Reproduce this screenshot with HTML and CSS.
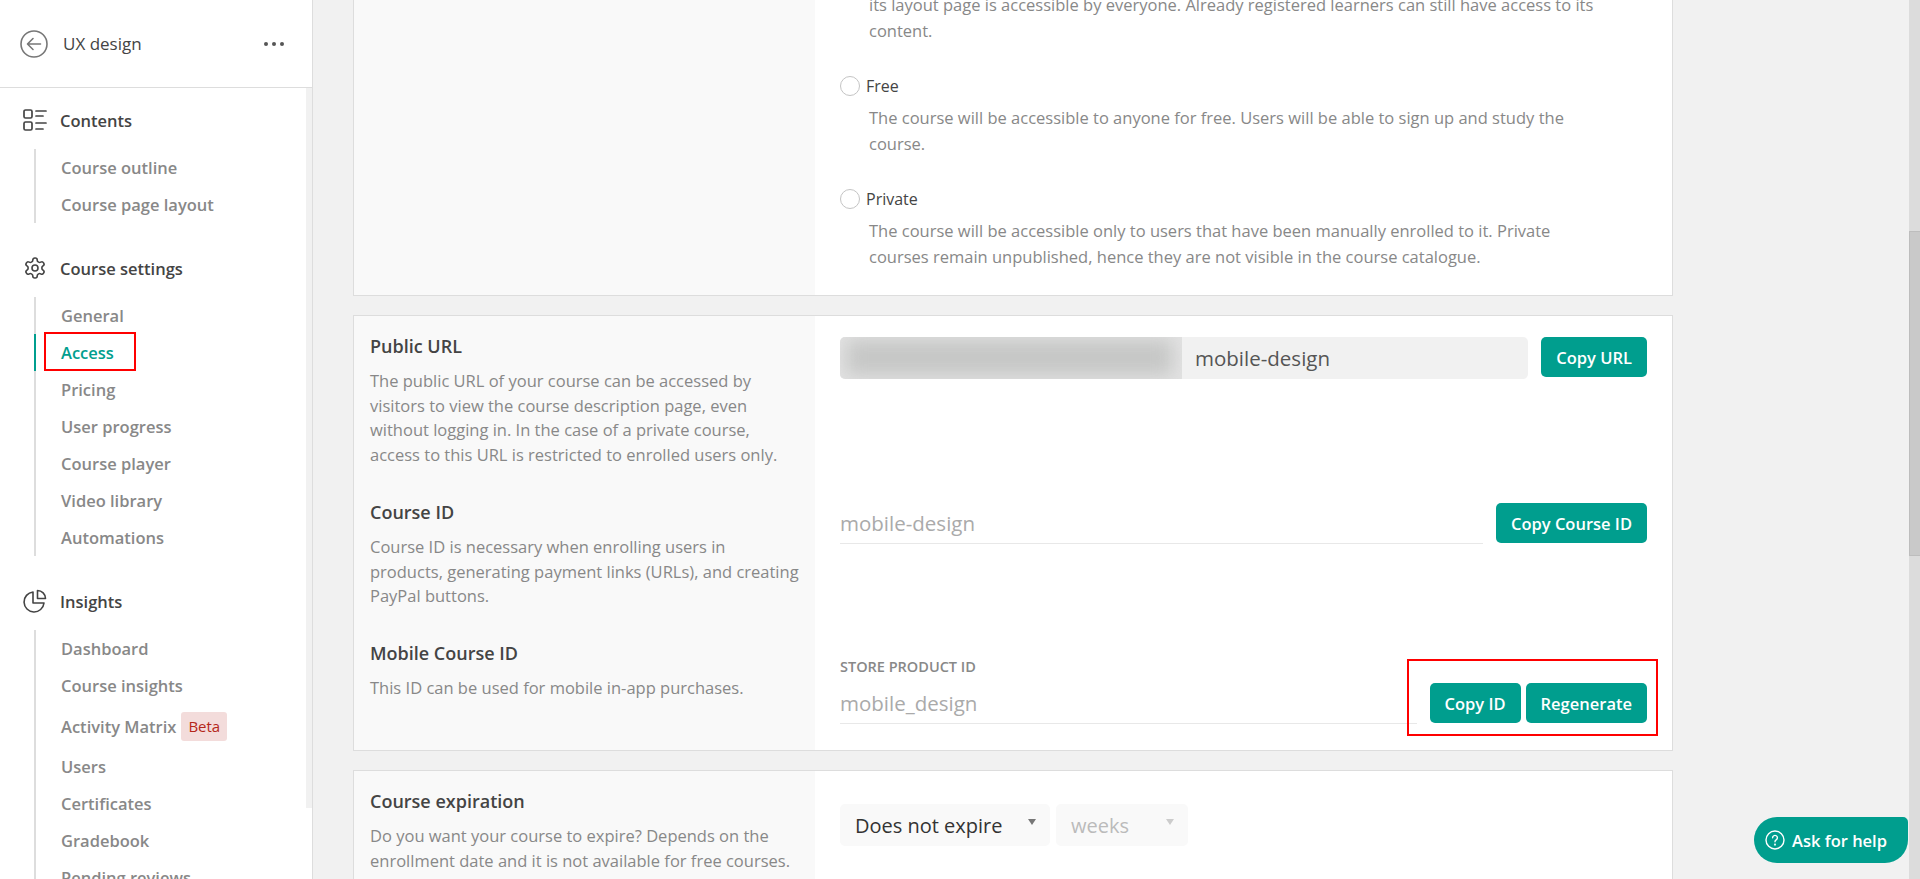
FILE: index.html
```html
<!DOCTYPE html>
<html lang="en">
<head>
  <meta charset="UTF-8">
  <meta name="viewport" content="width=device-width, initial-scale=1.0">
  <title>UX design - Access</title>
  <link rel="stylesheet" href="styles.css">
</head>
<body>
  <div class="app">

    <!-- sidebar -->
    <aside class="sidebar">
      <div class="side-head">
        <svg class="back-icon" viewBox="0 0 28 28" fill="none" stroke="#777" stroke-width="1.6" stroke-linecap="round" stroke-linejoin="round">
          <circle cx="14" cy="14" r="13"/>
          <path d="M20.5 14H8M13 8.5 7.5 14l5.5 5.5"/>
        </svg>
        <span class="side-title">UX design</span>
        <span class="dots"><i></i><i></i><i></i></span>
      </div>
      <div class="side-body">
        <nav class="side-nav">
          <div class="nav-head">
            <svg class="nav-icon" viewBox="0 0 24 24" fill="none" stroke="#444" stroke-width="1.7" stroke-linecap="round" stroke-linejoin="round">
              <rect x="1" y="2" width="8" height="8" rx="1.5"/>
              <rect x="1" y="14" width="8" height="8" rx="1.5"/>
              <path d="M13 3h10M13 8h7M13 15h10M13 21h7"/>
            </svg>
            Contents
          </div>
          <ul class="nav-list">
            <li class="nav-item">Course outline</li>
            <li class="nav-item">Course page layout</li>
          </ul>

          <div class="nav-head">
            <svg class="nav-icon" viewBox="0 0 24 24" fill="none" stroke="#444" stroke-width="1.6" stroke-linecap="round" stroke-linejoin="round">
              <path d="M12.22 2h-.44a2 2 0 0 0-2 2v.18a2 2 0 0 1-1 1.73l-.43.25a2 2 0 0 1-2 0l-.15-.08a2 2 0 0 0-2.73.73l-.22.38a2 2 0 0 0 .73 2.73l.15.1a2 2 0 0 1 1 1.72v.51a2 2 0 0 1-1 1.74l-.15.09a2 2 0 0 0-.73 2.73l.22.38a2 2 0 0 0 2.73.73l.15-.08a2 2 0 0 1 2 0l.43.25a2 2 0 0 1 1 1.73V20a2 2 0 0 0 2 2h.44a2 2 0 0 0 2-2v-.18a2 2 0 0 1 1-1.73l.43-.25a2 2 0 0 1 2 0l.15.08a2 2 0 0 0 2.73-.73l.22-.39a2 2 0 0 0-.73-2.73l-.15-.08a2 2 0 0 1-1-1.74v-.5a2 2 0 0 1 1-1.74l.15-.09a2 2 0 0 0 .73-2.73l-.22-.38a2 2 0 0 0-2.73-.73l-.15.08a2 2 0 0 1-2 0l-.43-.25a2 2 0 0 1-1-1.73V4a2 2 0 0 0-2-2z"/>
              <circle cx="12" cy="12" r="3"/>
            </svg>
            Course settings
          </div>
          <ul class="nav-list">
            <li class="nav-item">General</li>
            <li class="nav-item active">Access<span class="mark-access"></span></li>
            <li class="nav-item">Pricing</li>
            <li class="nav-item">User progress</li>
            <li class="nav-item">Course player</li>
            <li class="nav-item">Video library</li>
            <li class="nav-item">Automations</li>
          </ul>

          <div class="nav-head">
            <svg class="nav-icon" viewBox="0 0 24 24" fill="none" stroke="#444" stroke-width="1.6" stroke-linecap="round" stroke-linejoin="round">
              <path d="M10 3a10 10 0 1 0 11 11H10z"/>
              <path d="M14.5 1.5a8 8 0 0 1 8 8h-8z"/>
            </svg>
            Insights
          </div>
          <ul class="nav-list">
            <li class="nav-item">Dashboard</li>
            <li class="nav-item">Course insights</li>
            <li class="nav-item tall">Activity Matrix <span class="beta">Beta</span></li>
            <li class="nav-item">Users</li>
            <li class="nav-item">Certificates</li>
            <li class="nav-item">Gradebook</li>
            <li class="nav-item">Pending reviews</li>
          </ul>
        </nav>
        <div class="side-scroll"></div>
      </div>
    </aside>

    <!-- main settings -->
    <main class="main">
      <section class="card card-top">
        <div class="card-left"></div>
        <div class="card-right access-options">
          <p class="option-desc first">its layout page is accessible by everyone. Already registered learners can still have access to its content.</p>

          <label class="radio-row"><span class="radio"></span>Free</label>
          <p class="option-desc">The course will be accessible to anyone for free. Users will be able to sign up and study the course.</p>

          <label class="radio-row"><span class="radio"></span>Private</label>
          <p class="option-desc">The course will be accessible only to users that have been manually enrolled to it. Private courses remain unpublished, hence they are not visible in the course catalogue.</p>
        </div>
      </section>

      <section class="card card-ids">
        <div class="card-left row-url">
          <h3>Public URL</h3>
          <p>The public URL of your course can be accessed by visitors to view the course description page, even without logging in. In the case of a private course, access to this URL is restricted to enrolled users only.</p>
        </div>
        <div class="card-right row-url">
          <div class="line">
            <div class="url-box">
              <div class="url-prefix"><div class="url-blur"></div></div>
              <span class="url-slug">mobile-design</span>
            </div>
            <button class="btn">Copy URL</button>
          </div>
        </div>

        <div class="card-left row-id">
          <h3>Course ID</h3>
          <p>Course ID is necessary when enrolling users in products, generating payment links (URLs), and creating PayPal buttons.</p>
        </div>
        <div class="card-right row-id">
          <div class="line">
            <div class="field">mobile-design</div>
            <button class="btn">Copy Course ID</button>
          </div>
        </div>

        <div class="card-left row-mobile">
          <h3>Mobile Course ID</h3>
          <p>This ID can be used for mobile in-app purchases.</p>
        </div>
        <div class="card-right row-mobile">
          <div class="line line-mobile">
            <div class="field-wrap">
              <div class="field-label">STORE PRODUCT ID</div>
              <div class="field">mobile_design</div>
            </div>
            <div class="actions">
              <button class="btn">Copy ID</button>
              <button class="btn">Regenerate</button>
            </div>
          </div>
        </div>
      </section>

      <section class="card card-expire">
        <div class="card-left">
          <h3>Course expiration</h3>
          <p>Do you want your course to expire? Depends on the enrollment date and it is not available for free courses.</p>
        </div>
        <div class="card-right expire-right">
          <div class="select select-main">Does not expire<span class="caret"></span></div>
          <div class="select select-off">weeks<span class="caret"></span></div>
        </div>
      </section>
    </main>

    <div class="page-scroll"><div class="page-thumb"></div></div>
  </div>

  <!-- help button floats over the page -->
  <button class="help">
    <svg class="help-icon" viewBox="0 0 20 20" fill="none" stroke="#fff" stroke-width="1.4" stroke-linecap="round">
      <circle cx="10" cy="10" r="9"/>
      <path d="M7.6 7.8a2.4 2.4 0 1 1 3.6 2.1c-.8.5-1.2.9-1.2 1.8"/>
      <circle cx="10" cy="14.6" r=".4" fill="#fff"/>
    </svg>
    Ask for help
  </button>
</body>
</html>
```

FILE: styles.css
```css
* {
  box-sizing: border-box;
}

html, body {
  margin: 0;
  height: 100%;
  overflow: hidden;
}

body {
  font-family: "Open Sans", "Liberation Sans", sans-serif;
  font-size: 16px;
  color: #444;
  background-color: #f1f1f1;
}

.app {
  display: flex;
  height: 100vh;
}

/* sidebar */
.sidebar {
  flex: 0 0 313px;
  background-color: #fff;
  border-right: 1px solid #ddd;
  display: flex;
  flex-direction: column;
  overflow: hidden;
}

.side-head {
  flex: 0 0 88px;
  display: flex;
  align-items: center;
  padding-left: 20px;
  border-bottom: 1px solid #ddd;
}

.back-icon {
  width: 28px;
  height: 28px;
  margin-right: 15px;
}

.side-title {
  font-size: 17px;
  font-weight: 500;
  flex: 1;
}

.dots {
  display: flex;
  gap: 4px;
  margin-right: 28px;
}

.dots i {
  width: 4px;
  height: 4px;
  border-radius: 50%;
  background-color: #555;
}

.side-body {
  flex: 1;
  display: flex;
  min-height: 0;
}

.side-nav {
  flex: 1;
  padding: 18px 0 0 0;
}

.side-scroll {
  flex: 0 0 6px;
  height: 720px;
  background-color: #f1f1f1;
}

.nav-head {
  height: 30px;
  display: flex;
  align-items: center;
  padding-left: 23px;
  padding-bottom: 2px;
  font-size: 16.5px;
  font-weight: 600;
  color: #444;
  margin-bottom: 13px;
}

.nav-icon {
  width: 24px;
  height: 24px;
  margin-right: 13px;
}

.nav-list {
  list-style: none;
  margin: 0 0 31px 34px;
  padding: 0;
  border-left: 2px solid #ddd;
}

.nav-item {
  position: relative;
  height: 37px;
  line-height: 37px;
  padding-left: 25px;
  font-size: 16.5px;
  font-weight: 600;
  color: #888;
  white-space: nowrap;
}

.nav-item.tall {
  height: 44px;
  line-height: 43px;
  display: flex;
  align-items: center;
  gap: 5px;
}

.nav-item.active {
  color: #009e8e;
  margin-left: -2px;
  border-left: 2px solid #009e8e;
}

.mark-access {
  position: absolute;
  left: 8px;
  top: -2px;
  width: 92px;
  height: 39px;
  border: 2px solid #f00;
}

.beta {
  display: inline-block;
  height: 29px;
  line-height: 29px;
  padding: 0 7px;
  font-size: 15px;
  font-weight: 400;
  color: #b5271a;
  background-color: #f3dcdb;
  border-radius: 3px;
}

/* main column */
.main {
  flex: 1;
  min-width: 0;
  padding: 0 0 0 40px;
  overflow: hidden;
}

.card {
  width: 1320px;
  background-color: #fff;
  border: 1px solid #ddd;
  display: grid;
  grid-template-columns: 461px 1fr;
  margin-bottom: 19px;
}

.card-top {
  border-top: 0;
  margin-top: -8px;
}

.card-left {
  background-color: #f9f9f9;
  padding: 0 16px;
}

.card-right {
  padding: 0 25px;
}

.card-left h3 {
  margin: 0 0 8px;
  height: 30px;
  line-height: 30px;
  font-size: 18px;
  font-weight: 600;
  color: #444;
}

.card-left p {
  margin: 0;
  font-size: 16.5px;
  line-height: 24.5px;
  color: #888;
}

/* access options */
.access-options {
  padding-bottom: 25px;
}

.option-desc {
  max-width: 735px;
  margin: 6px 0 0 29px;
  font-size: 16.5px;
  line-height: 26px;
  color: #888;
}

.option-desc.first {
  margin-top: 0;
}

.radio-row {
  display: flex;
  align-items: center;
  height: 26px;
  margin-top: 29px;
  font-size: 16px;
}

.radio {
  width: 20px;
  height: 20px;
  margin-right: 6px;
  border: 1px solid #c4c4c4;
  border-radius: 50%;
  background-color: #fff;
}

/* id rows */
.row-url {
  padding-top: 15px;
  height: 166px;
}

.row-id {
  padding-top: 15px;
  height: 141px;
}

.row-mobile {
  padding-top: 15px;
  height: 127px;
}

.card-right.row-url,
.card-right.row-id {
  padding-top: 21px;
}

.card-right.row-mobile {
  padding-top: 35px;
}

.line {
  display: flex;
  gap: 13px;
}

.url-box {
  flex: 1;
  display: flex;
  align-items: center;
  height: 42px;
  background-color: #f1f1f1;
  border-radius: 5px;
  overflow: hidden;
}

.url-prefix {
  flex: 0 0 342px;
  height: 100%;
  padding: 3px 10px 4px 7px;
  background-color: #e2e2e2;
  overflow: hidden;
}

.url-blur {
  height: 100%;
  background-color: #c6c7c6;
  filter: blur(9px);
}

.url-slug {
  padding-left: 13px;
  font-size: 20.5px;
  color: #555;
}

.btn {
  flex: none;
  height: 40px;
  padding: 0 15px;
  border: none;
  border-radius: 5px;
  background-color: #009e8e;
  color: #fff;
  font-family: inherit;
  font-size: 16.5px;
  font-weight: 600;
}

.field {
  flex: 1;
  height: 41px;
  line-height: 41px;
  font-size: 20.5px;
  color: #aaa;
  border-bottom: 1px solid #e8e8e8;
}

.field-wrap {
  flex: 1;
}

.field-label {
  height: 18px;
  line-height: 18px;
  font-size: 14.5px;
  font-weight: 600;
  color: #888;
  margin-bottom: 7px;
}

.line-mobile {
  align-items: flex-start;
}

.actions {
  position: relative;
  display: flex;
  gap: 5px;
  margin-top: 25px;
}

/* red note round the two buttons */
.actions::before {
  content: "";
  position: absolute;
  top: -24px;
  right: -11px;
  bottom: -13px;
  left: -23px;
  border: 2px solid #f00;
}

/* expiration */
.card-expire .card-left {
  padding-top: 15px;
  height: 140px;
}

.expire-right {
  display: flex;
  gap: 6px;
  padding-top: 33px;
}

.select {
  display: flex;
  align-items: center;
  justify-content: space-between;
  height: 42px;
  padding: 0 14px 0 15px;
  font-size: 20px;
  background-color: #f9f9f9;
  border-radius: 5px;
}

.select-main {
  width: 210px;
  color: #333;
}

.select-off {
  width: 132px;
  color: #bbb;
}

.caret {
  width: 0;
  height: 0;
  border-left: 4px solid transparent;
  border-right: 4px solid transparent;
  border-top: 6px solid #777;
  margin-top: -6px;
}

.select-off .caret {
  border-top-color: #ccc;
}

/* page scrollbar */
.page-scroll {
  flex: 0 0 11px;
  background-color: #dcdcdc;
}

.page-thumb {
  height: 325px;
  margin-top: 231px;
  background-color: #c9c9c9;
  border: 1px solid #bdbdbd;
  border-right: 0;
}

/* help button */
.help {
  position: fixed;
  right: 12px;
  bottom: 16px;
  display: flex;
  align-items: center;
  gap: 7px;
  width: 154px;
  height: 46px;
  padding: 0 0 0 11px;
  border: none;
  border-radius: 23px 5px 23px 23px;
  background-color: #009e8e;
  color: #fff;
  font-family: inherit;
  font-size: 16.5px;
  font-weight: 600;
}

.help-icon {
  width: 20px;
  height: 20px;
}
```
